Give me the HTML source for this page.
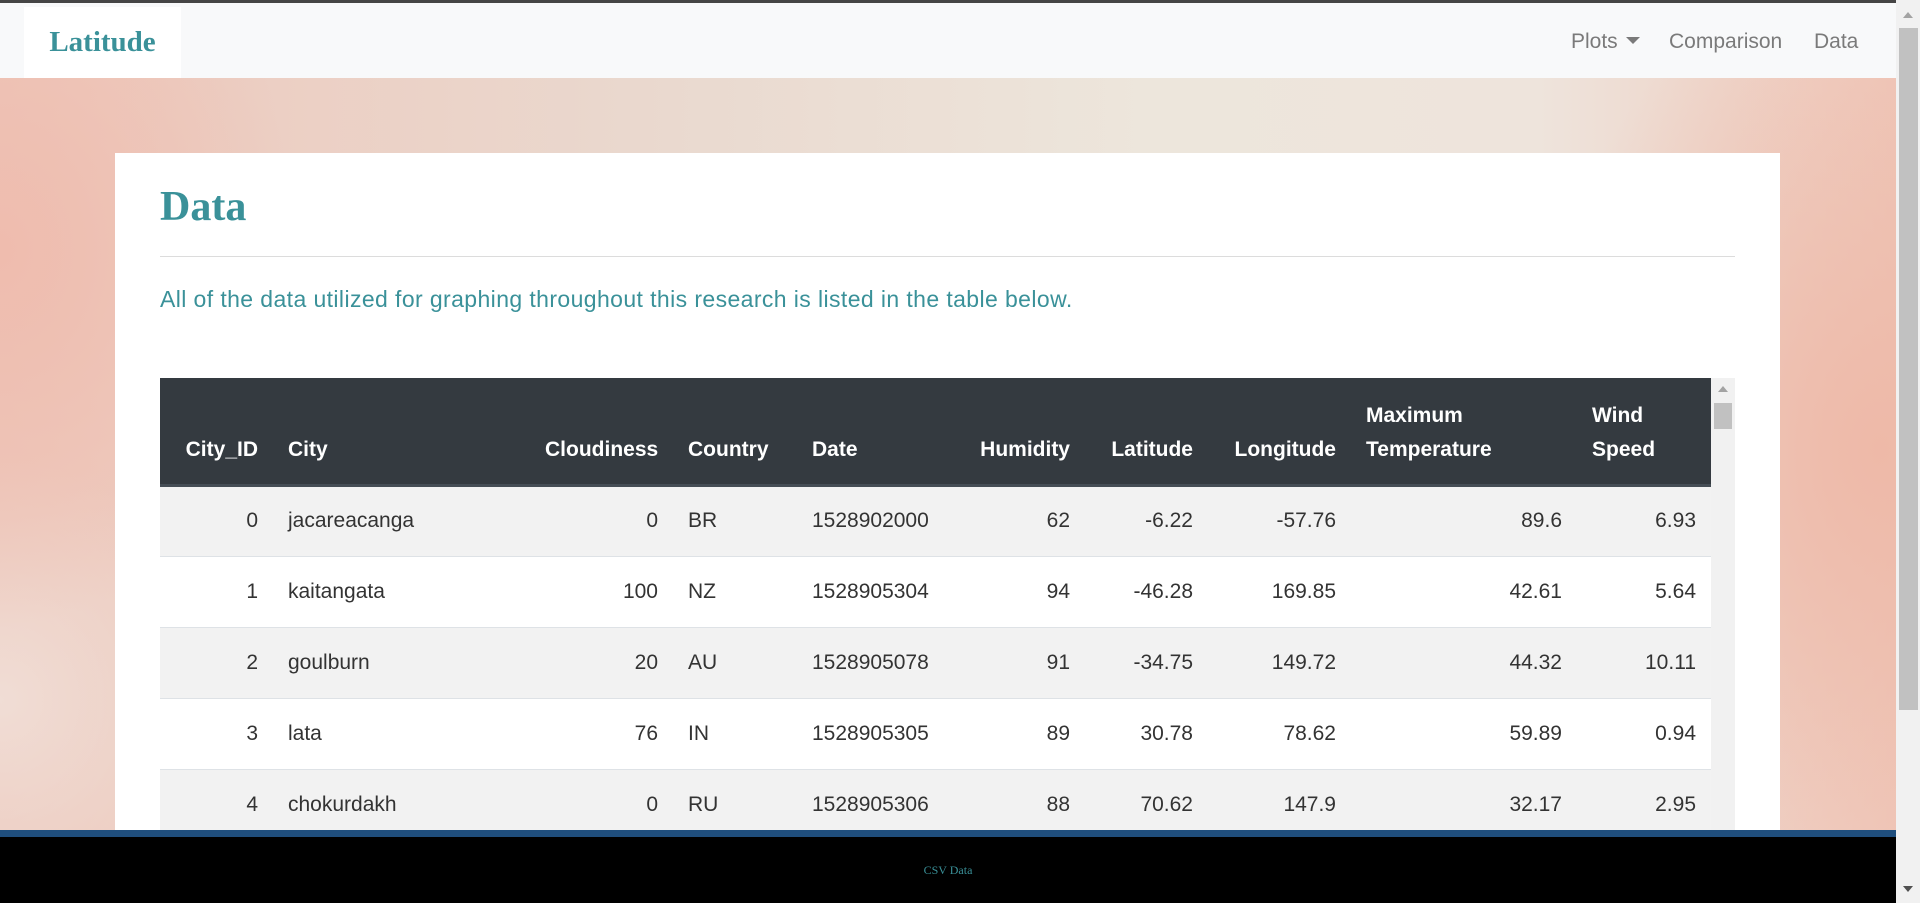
<!DOCTYPE html>
<html><head><meta charset="utf-8">
<style>
*{box-sizing:border-box;margin:0;padding:0}
html,body{width:1920px;height:903px;overflow:hidden}
body{position:relative;font-family:"Liberation Sans",sans-serif;
background:
radial-gradient(ellipse 500px 700px at 1880px 450px,#eeb9a8 0%,rgba(238,185,168,0) 70%),
radial-gradient(ellipse 400px 500px at 0px 250px,#efbcae 0%,rgba(239,188,174,0) 75%),
radial-gradient(ellipse 300px 300px at 0px 700px,#f0ddd5 0%,rgba(240,221,213,0) 80%),
linear-gradient(90deg,#edc8bc 0%,#ead9cf 35%,#ede6dc 60%,#eee4dc 80%,#efc6b8 100%);}
.topb{position:absolute;left:0;top:0;width:1896px;height:3px;background:#454545}
.nav{position:absolute;left:0;top:3px;width:1896px;height:75px;background:#f8f9fa}
.brand{position:absolute;left:24px;top:4px;width:157px;height:71px;background:#fff;font-family:"Liberation Serif",serif;font-weight:bold;font-size:29px;color:#3a9199;line-height:71px;text-align:center}
.nl{position:absolute;top:0;line-height:78px;font-size:21px;color:#7a7a7a}
.caret{display:inline-block;width:0;height:0;border-left:7px solid transparent;border-right:7px solid transparent;border-top:7px solid #7a7a7a;vertical-align:4px;margin-left:8px}
.card{position:absolute;left:115px;top:153px;width:1665px;height:700px;background:#fff}
h1{position:absolute;left:45px;top:30px;font-family:"Liberation Serif",serif;font-weight:bold;font-size:42px;color:#3a9199}
.hr{position:absolute;left:45px;top:103px;width:1575px;height:1px;background:#dcdcdc}
.p{position:absolute;left:45px;top:133px;font-size:23px;letter-spacing:0.4px;color:#3a9199}
.tw{position:absolute;left:45px;top:225px;width:1575px;height:452px;overflow:hidden}
table{border-collapse:collapse;table-layout:fixed;width:1551px;font-size:21px;color:#333}
th{background:#343a40;color:#fff;font-weight:bold;text-align:left;vertical-align:bottom;padding:0 15px 17px;height:107px;line-height:34px;border-bottom:3px solid #454d55}
td{height:71px;padding:0 15px;border-top:1px solid #dee2e6}
tr:nth-child(even) td{background:#f2f2f2}
.r{text-align:right}
.sb{position:absolute;left:1551px;top:0;width:24px;height:452px;background:#f1f1f1}
.sb .th{position:absolute;left:3px;top:25px;width:18px;height:26px;background:#c1c1c1}
.up{position:absolute;left:7px;top:8px;border-left:5px solid transparent;border-right:5px solid transparent;border-bottom:6px solid #a3a3a3}
.foot{position:absolute;left:0;top:830px;width:1896px;height:73px;background:#000;border-top:7px solid #1f4e7d}
.foot span{position:absolute;left:0;width:100%;top:26px;text-align:center;font-family:"Liberation Serif",serif;font-size:12px;color:#3a9199}
.psb{position:absolute;left:1896px;top:0;width:24px;height:903px;background:#f1f1f1}
.psb .th{position:absolute;left:3px;top:28px;width:19px;height:682px;background:#c1c1c1}
.psb .u{position:absolute;left:7px;top:12px;border-left:5px solid transparent;border-right:5px solid transparent;border-bottom:6px solid #a3a3a3}
.psb .d{position:absolute;left:7px;top:886px;border-left:5px solid transparent;border-right:5px solid transparent;border-top:6px solid #505050}
</style></head><body>
<div class="topb"></div>
<div class="nav">
<div class="brand">Latitude</div>
<div class="nl" style="left:1571px">Plots<span class="caret"></span></div>
<div class="nl" style="left:1669px">Comparison</div>
<div class="nl" style="left:1814px">Data</div>
</div>
<div class="card">
<h1>Data</h1>
<div class="hr"></div>
<div class="p">All of the data utilized for graphing throughout this research is listed in the table below.</div>
<div class="tw">
<table>
<colgroup><col style="width:113px"><col style="width:257px"><col style="width:143px"><col style="width:124px"><col style="width:153px"><col style="width:135px"><col style="width:123px"><col style="width:143px"><col style="width:226px"><col style="width:134px"></colgroup>
<tr><th class="r">City_ID</th><th>City</th><th class="r">Cloudiness</th><th>Country</th><th>Date</th><th class="r">Humidity</th><th class="r">Latitude</th><th class="r">Longitude</th><th>Maximum Temperature</th><th>Wind Speed</th></tr>
<tr><td class="r">0</td><td>jacareacanga</td><td class="r">0</td><td>BR</td><td>1528902000</td><td class="r">62</td><td class="r">-6.22</td><td class="r">-57.76</td><td class="r">89.6</td><td class="r">6.93</td></tr>
<tr><td class="r">1</td><td>kaitangata</td><td class="r">100</td><td>NZ</td><td>1528905304</td><td class="r">94</td><td class="r">-46.28</td><td class="r">169.85</td><td class="r">42.61</td><td class="r">5.64</td></tr>
<tr><td class="r">2</td><td>goulburn</td><td class="r">20</td><td>AU</td><td>1528905078</td><td class="r">91</td><td class="r">-34.75</td><td class="r">149.72</td><td class="r">44.32</td><td class="r">10.11</td></tr>
<tr><td class="r">3</td><td>lata</td><td class="r">76</td><td>IN</td><td>1528905305</td><td class="r">89</td><td class="r">30.78</td><td class="r">78.62</td><td class="r">59.89</td><td class="r">0.94</td></tr>
<tr><td class="r">4</td><td>chokurdakh</td><td class="r">0</td><td>RU</td><td>1528905306</td><td class="r">88</td><td class="r">70.62</td><td class="r">147.9</td><td class="r">32.17</td><td class="r">2.95</td></tr>
<tr><td class="r">5</td><td>x</td><td class="r">0</td><td>x</td><td>x</td><td class="r">0</td><td class="r">0</td><td class="r">0</td><td class="r">0</td><td class="r">0</td></tr>
</table>
<div class="sb"><div class="up"></div><div class="th"></div></div>
</div>
</div>
<div class="foot"><span>CSV Data</span></div>
<div class="psb"><div class="u"></div><div class="th"></div><div class="d"></div></div>
</body></html>
